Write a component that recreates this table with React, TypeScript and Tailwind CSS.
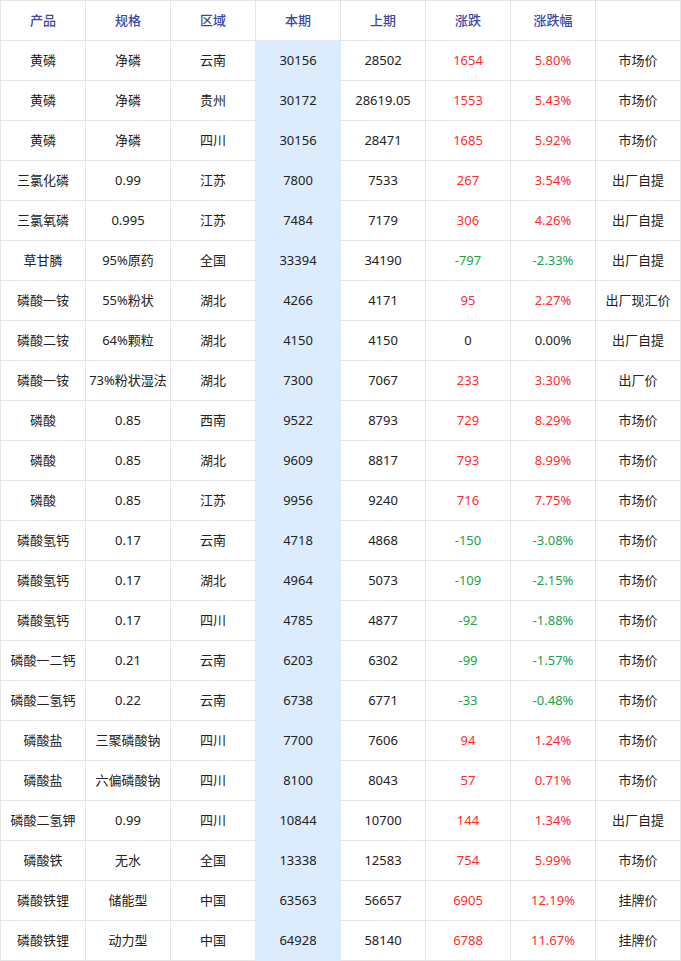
import React from "react";

type Row = [string, string, string, string, string, string, string, string];

const rows: Row[] = [
  ["黄磷", "净磷", "云南", "30156", "28502", "1654", "5.80%", "市场价"],
  ["黄磷", "净磷", "贵州", "30172", "28619.05", "1553", "5.43%", "市场价"],
  ["黄磷", "净磷", "四川", "30156", "28471", "1685", "5.92%", "市场价"],
  ["三氯化磷", "0.99", "江苏", "7800", "7533", "267", "3.54%", "出厂自提"],
  ["三氯氧磷", "0.995", "江苏", "7484", "7179", "306", "4.26%", "出厂自提"],
  ["草甘膦", "95%原药", "全国", "33394", "34190", "-797", "-2.33%", "出厂自提"],
  ["磷酸一铵", "55%粉状", "湖北", "4266", "4171", "95", "2.27%", "出厂现汇价"],
  ["磷酸二铵", "64%颗粒", "湖北", "4150", "4150", "0", "0.00%", "出厂自提"],
  ["磷酸一铵", "73%粉状湿法", "湖北", "7300", "7067", "233", "3.30%", "出厂价"],
  ["磷酸", "0.85", "西南", "9522", "8793", "729", "8.29%", "市场价"],
  ["磷酸", "0.85", "湖北", "9609", "8817", "793", "8.99%", "市场价"],
  ["磷酸", "0.85", "江苏", "9956", "9240", "716", "7.75%", "市场价"],
  ["磷酸氢钙", "0.17", "云南", "4718", "4868", "-150", "-3.08%", "市场价"],
  ["磷酸氢钙", "0.17", "湖北", "4964", "5073", "-109", "-2.15%", "市场价"],
  ["磷酸氢钙", "0.17", "四川", "4785", "4877", "-92", "-1.88%", "市场价"],
  ["磷酸一二钙", "0.21", "云南", "6203", "6302", "-99", "-1.57%", "市场价"],
  ["磷酸二氢钙", "0.22", "云南", "6738", "6771", "-33", "-0.48%", "市场价"],
  ["磷酸盐", "三聚磷酸钠", "四川", "7700", "7606", "94", "1.24%", "市场价"],
  ["磷酸盐", "六偏磷酸钠", "四川", "8100", "8043", "57", "0.71%", "市场价"],
  ["磷酸二氢钾", "0.99", "四川", "10844", "10700", "144", "1.34%", "出厂自提"],
  ["磷酸铁", "无水", "全国", "13338", "12583", "754", "5.99%", "市场价"],
  ["磷酸铁锂", "储能型", "中国", "63563", "56657", "6905", "12.19%", "挂牌价"],
  ["磷酸铁锂", "动力型", "中国", "64928", "58140", "6788", "11.67%", "挂牌价"],
];

const headers = ["产品", "规格", "区域", "本期", "上期", "涨跌", "涨跌幅", ""];

function changeColor(v: string) {
  if (v.startsWith("-")) return "text-[#1aa34a]";
  if (/^0(\.00%)?$/.test(v)) return "text-[#222222]";
  return "text-[#ff2b2b]";
}

export default function App() {
  return (
    <div
      className="w-[681px] bg-white text-[13px] leading-none text-[#222222]"
      style={{ fontFamily: '"Noto Sans", "Noto Sans CJK SC", sans-serif' }}
    >
      <div className="flex h-[41px] border-t border-[#e6e6e6]">
        {headers.map((h, i) => (
          <div
            key={i}
            className={`flex w-[85px] items-center justify-center border-l border-b border-l-[#e6e6e6] font-medium text-[#3b4aa0] ${
              i === 3 ? "border-b-[#ddecfd]" : "border-b-[#e6e6e6]"
            } ${i === 7 ? "w-[86px] border-r border-r-[#e6e6e6]" : ""}`}
          >
            {h}
          </div>
        ))}
      </div>
      {rows.map((r, ri) => (
        <div key={ri} className="flex h-[40px]">
          {r.map((c, ci) => {
            const isBlue = ci === 3;
            const afterBlue = ci === 4;
            const color = ci === 5 || ci === 6 ? changeColor(c) : "";
            return (
              <div
                key={ci}
                className={`flex w-[85px] items-center justify-center border-l border-b ${
                  isBlue
                    ? "border-[#ddecfd] bg-[#ddecfd]"
                    : afterBlue
                    ? "border-b-[#e6e6e6] border-l-[#ddecfd]"
                    : "border-[#e6e6e6]"
                } ${ci === 7 ? "w-[86px] border-r" : ""} ${color}`}
              >
                {c}
              </div>
            );
          })}
        </div>
      ))}
    </div>
  );
}
